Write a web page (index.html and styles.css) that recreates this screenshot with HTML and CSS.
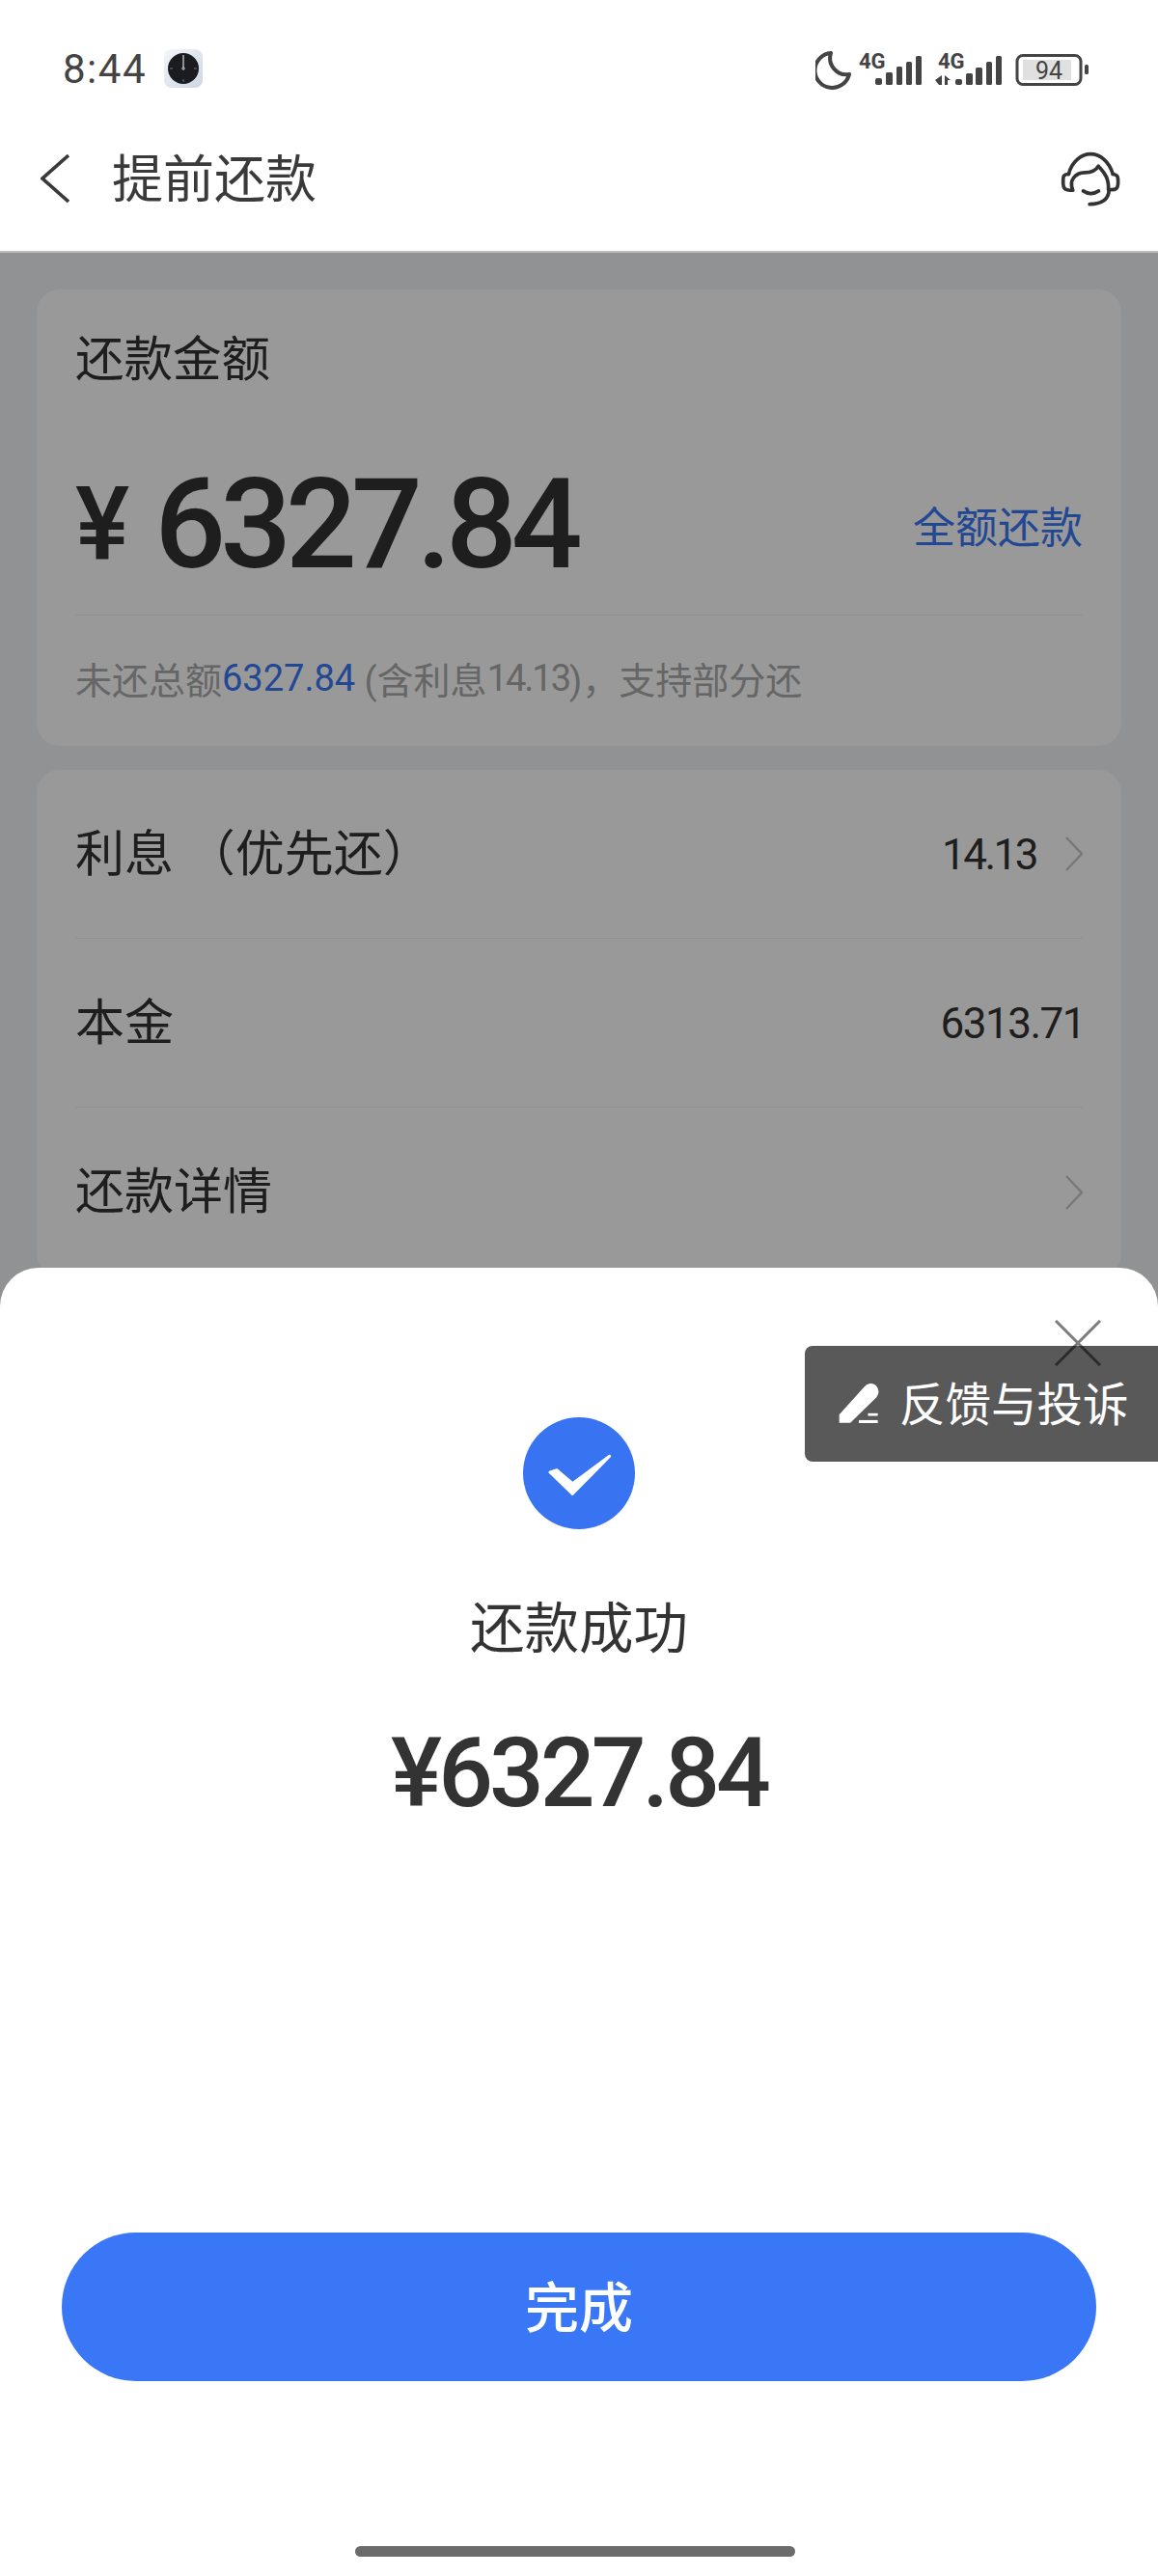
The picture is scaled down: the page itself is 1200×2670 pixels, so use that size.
FILE: index.html
```html
<!DOCTYPE html>
<html lang="zh-CN">
<head>
    <meta charset="UTF-8">
    <meta name="viewport" content="width=device-width, initial-scale=1.0">
    <title>提前还款</title>
    <link rel="stylesheet" href="styles.css">
</head>
<body>
<div class="page">
    <div class="status-bar">
        <span class="status-time">8:44</span>
        <svg class="clock-icon" viewBox="0 0 40 40">
            <defs>
                <linearGradient id="clock-bg" x1="0" y1="0" x2="1" y2="1">
                    <stop offset="0" stop-color="#f4f6f9"/>
                    <stop offset="1" stop-color="#ccd6e2"/>
                </linearGradient>
            </defs>
            <rect width="40" height="40" rx="8" fill="url(#clock-bg)"/>
            <circle cx="20" cy="20" r="16" fill="#1b1c20"/>
            <path d="M20 6V19" stroke="#fff" stroke-width="1" fill="none"/>
            <path d="M20 31V34M6 20H9M31 20H34" stroke="#777" stroke-width="1" fill="none"/>
            <circle cx="20" cy="20" r="1.2" fill="#1b1c20" stroke="#fff" stroke-width="0.8"/>
        </svg>
        <svg class="status-icons" viewBox="845 40 285 60">
            <path d="M861 54A18 18 0 1 0 880 76A17 17 0 0 1 861 54Z" fill="none" stroke="#444" stroke-width="4" stroke-linejoin="round"/>
            <text class="net-label" x="890" y="70">4G</text>
            <g fill="#444">
                <rect x="907" y="80" width="7" height="7" rx="2"/>
                <rect x="918" y="74" width="7" height="13" rx="1.5"/>
                <rect x="929" y="68" width="6" height="19" rx="1.5"/>
                <rect x="939" y="63" width="6" height="24" rx="1.5"/>
                <rect x="949" y="57" width="6" height="30" rx="1.5"/>
            </g>
            <text class="net-label" x="972" y="70">4G</text>
            <g fill="#444">
                <path d="M969 82L976 77V87H973Z"/>
                <path d="M979 77L985 82L982 82V87H979Z"/>
                <rect x="990" y="81" width="7" height="6" rx="2"/>
                <rect x="1001" y="75" width="7" height="12" rx="1.5"/>
                <rect x="1011" y="69" width="7" height="18" rx="1.5"/>
                <rect x="1022" y="63" width="6" height="24" rx="1.5"/>
                <rect x="1032" y="57" width="6" height="30" rx="1.5"/>
            </g>
            <rect x="1054" y="56.5" width="66" height="30" rx="6" fill="none" stroke="#444" stroke-width="3"/>
            <rect x="1060" y="61" width="50" height="21" fill="#e0e0e0"/>
            <text class="battery-label" x="1087" y="81" text-anchor="middle">94</text>
            <rect x="1124" y="66" width="4" height="10" rx="1.5" fill="#444"/>
        </svg>
    </div>

    <div class="header">
        <svg class="back-icon" viewBox="0 0 30 50">
            <path d="M29 1L2 25L29 49" fill="none" stroke="#3a3a3a" stroke-width="3.6"/>
        </svg>
        <span class="header-title">提前还款</span>
        <svg class="service-icon" viewBox="900 420 185 170">
            <g fill="none" stroke="#333" stroke-width="11" stroke-linecap="round" stroke-linejoin="round">
                <path d="M925 490C935 450 965 428 993 428C1022 428 1050 450 1062 490"/>
                <path d="M925 490C908 490 908 497 908 515C908 535 912 540 938 540C925 510 945 485 975 485C1000 485 1010 478 1017 465C1030 482 1050 495 1048 538"/>
                <path d="M1062 490C1078 492 1078 500 1078 515C1078 535 1072 540 1050 538"/>
                <path d="M970 542C985 552 1003 552 1018 542"/>
                <path d="M1050 540C1048 570 1025 583 990 583"/>
            </g>
        </svg>
    </div>

    <div class="content">
        <div class="card">
            <div class="card-title">还款金额</div>
            <div class="amount-row">
                <span class="amount-sign">¥</span>
                <span class="amount-value">6327.84</span>
                <span class="amount-link">全额还款</span>
            </div>
            <div class="amount-note">未还总额<span class="note-blue">6327.84</span> (含利息<span class="note-num">14.13</span>)，支持部分还</div>
        </div>

        <div class="card">
            <div class="row">
                <span class="row-label">利息 （优先还）</span>
                <span class="row-value row-value-short">14.13</span>
                <svg class="row-arrow" viewBox="0 0 18 36"><path d="M1 1L17 18L1 35" fill="none" stroke="#c8c8c8" stroke-width="2.5"/></svg>
            </div>
            <div class="row">
                <span class="row-label">本金</span>
                <span class="row-value row-value-end">6313.71</span>
            </div>
            <div class="row">
                <span class="row-label">还款详情</span>
                <svg class="row-arrow" viewBox="0 0 18 36"><path d="M1 1L17 18L1 35" fill="none" stroke="#c8c8c8" stroke-width="2.5"/></svg>
            </div>
        </div>
    </div>

    <div class="scrim"></div>

    <div class="sheet">
        <svg class="sheet-close" viewBox="0 0 48 48">
            <path d="M1 1L47 47M47 1L1 47" fill="none" stroke="#7c7c7c" stroke-width="3"/>
        </svg>
        <div class="feedback">
            <svg class="feedback-icon" viewBox="268 458 124 124">
                <path d="M270 578V553L345 470Q360 450 382 463Q398 482 384 500L304 578Z" fill="#fff"/>
                <rect x="330" y="570" width="58" height="9" fill="#fff"/>
                <rect x="358" y="549" width="30" height="8" fill="#fff"/>
            </svg>
            <span>反馈与投诉</span>
        </div>
        <svg class="success-icon" viewBox="0 0 116 116">
            <circle cx="58" cy="58" r="58" fill="#3874f2"/>
            <path d="M28 57L35 54.7L51.3 68.7L89.7 40.3L51.3 79.3Z" fill="#fff" stroke="#fff" stroke-width="3" stroke-linejoin="round"/>
        </svg>
        <div class="success-title">还款成功</div>
        <div class="success-amount">¥6327.84</div>
        <button class="done-button">完成</button>
        <div class="home-bar"></div>
    </div>
</div>
</body>
</html>
```

FILE: styles.css
```css
* {
    box-sizing: border-box;
    margin: 0;
    padding: 0;
}

body {
    font-family: Roboto, "Noto Sans CJK SC", sans-serif;
    color: #333;
    background-color: #fff;
}

.page {
    position: relative;
    width: 1200px;
    height: 2670px;
    overflow: hidden;
    background-color: #f2f4f6;
}

.status-bar {
    display: flex;
    align-items: center;
    height: 112px;
    padding: 30px 70px 0 65px;
    background-color: #fff;
}

.status-time {
    font-size: 42px;
    letter-spacing: 1.5px;
    color: #444;
}

.clock-icon {
    width: 40px;
    height: 40px;
    margin-left: 18px;
}

.status-icons {
    width: 285px;
    height: 60px;
    margin-left: auto;
}

.net-label {
    font-size: 22px;
    font-weight: 700;
    fill: #444;
}

.battery-label {
    font-size: 25px;
    fill: #444;
}

.header {
    display: flex;
    align-items: center;
    height: 150px;
    padding: 0 39px 2px 42px;
    background-color: #fff;
    border-bottom: 2px solid #bdbdbd;
}

.back-icon {
    width: 30px;
    height: 50px;
}

.header-title {
    margin-left: 44px;
    padding-top: 3px;
    font-size: 53px;
    line-height: 70px;
    color: #3a3a3a;
}

.service-icon {
    width: 62px;
    height: 57px;
    margin-left: auto;
}

.content {
    display: flex;
    flex-direction: column;
    gap: 25px;
    padding: 38px;
}

.card {
    padding: 0 40px;
    background-color: #fff;
    border-radius: 24px;
}

.card-title {
    padding-top: 45px;
    font-size: 50.5px;
    line-height: 56px;
}

.amount-row {
    display: flex;
    align-items: center;
    height: 237px;
    padding-top: 50px;
    border-bottom: 1px solid #f0f0f0;
}

.amount-sign {
    font-size: 106px;
    font-weight: 500;
    line-height: 140px;
}

.amount-value {
    margin-left: 26px;
    font-size: 130px;
    font-weight: 500;
    line-height: 140px;
    letter-spacing: -6px;
}

.amount-link {
    margin-left: auto;
    font-size: 44px;
    color: #3977f6;
}

.amount-note {
    display: flex;
    align-items: center;
    height: 135px;
    padding-bottom: 6px;
    font-size: 38px;
    white-space: pre;
    color: #aaa;
}

.note-blue {
    color: #3977f6;
}

.note-num {
    letter-spacing: -2px;
}

.row {
    display: flex;
    align-items: center;
    height: 175px;
    border-bottom: 1px solid #f0f0f0;
}

.row:last-child {
    border-bottom: none;
}

.row-label {
    padding-top: 1px;
    font-size: 51px;
    line-height: 60px;
}

.row-value {
    margin-left: auto;
    padding-top: 1px;
    font-size: 44px;
    letter-spacing: -1.5px;
}

.row-value-short {
    letter-spacing: -2.5px;
}

.row-value-end {
    margin-right: -2px;
}

.row-arrow {
    width: 18px;
    height: 36px;
    margin-left: 30px;
}

.row-label + .row-arrow {
    margin-left: auto;
}

.scrim {
    position: absolute;
    top: 262px;
    left: 0;
    right: 0;
    bottom: 0;
    background-color: rgba(0, 0, 0, 0.4);
}

.sheet {
    position: absolute;
    left: 0;
    right: 0;
    bottom: 0;
    height: 1356px;
    display: flex;
    flex-direction: column;
    align-items: center;
    padding-top: 155px;
    background-color: #fff;
    border-radius: 40px 40px 0 0;
}

.sheet-close {
    position: absolute;
    top: 54px;
    right: 59px;
    width: 48px;
    height: 48px;
}

.feedback {
    position: absolute;
    top: 81px;
    right: 0;
    display: flex;
    align-items: center;
    gap: 21px;
    width: 366px;
    height: 120px;
    padding: 0 0 6px 35px;
    font-size: 47.5px;
    color: #fff;
    background-color: rgba(0, 0, 0, 0.65);
    border-radius: 8px 0 0 8px;
}

.feedback-icon {
    width: 42px;
    height: 42px;
    margin-top: 6px;
}

.success-icon {
    width: 116px;
    height: 116px;
}

.success-title {
    margin-top: 69px;
    font-size: 56.5px;
    line-height: 70px;
}

.success-amount {
    margin-top: 54px;
    font-size: 100px;
    font-weight: 500;
    line-height: 120px;
    letter-spacing: -4px;
}

.done-button {
    width: 1072px;
    height: 154px;
    margin-top: auto;
    padding-bottom: 8px;
    font-family: inherit;
    font-size: 56px;
    font-weight: 500;
    color: #fff;
    border: none;
    border-radius: 77px;
    background-color: #3977f6;
}

.home-bar {
    width: 456px;
    height: 11px;
    margin: 171px 8px 20px 0;
    border-radius: 6px;
    background-color: #6b6b6b;
}
```
